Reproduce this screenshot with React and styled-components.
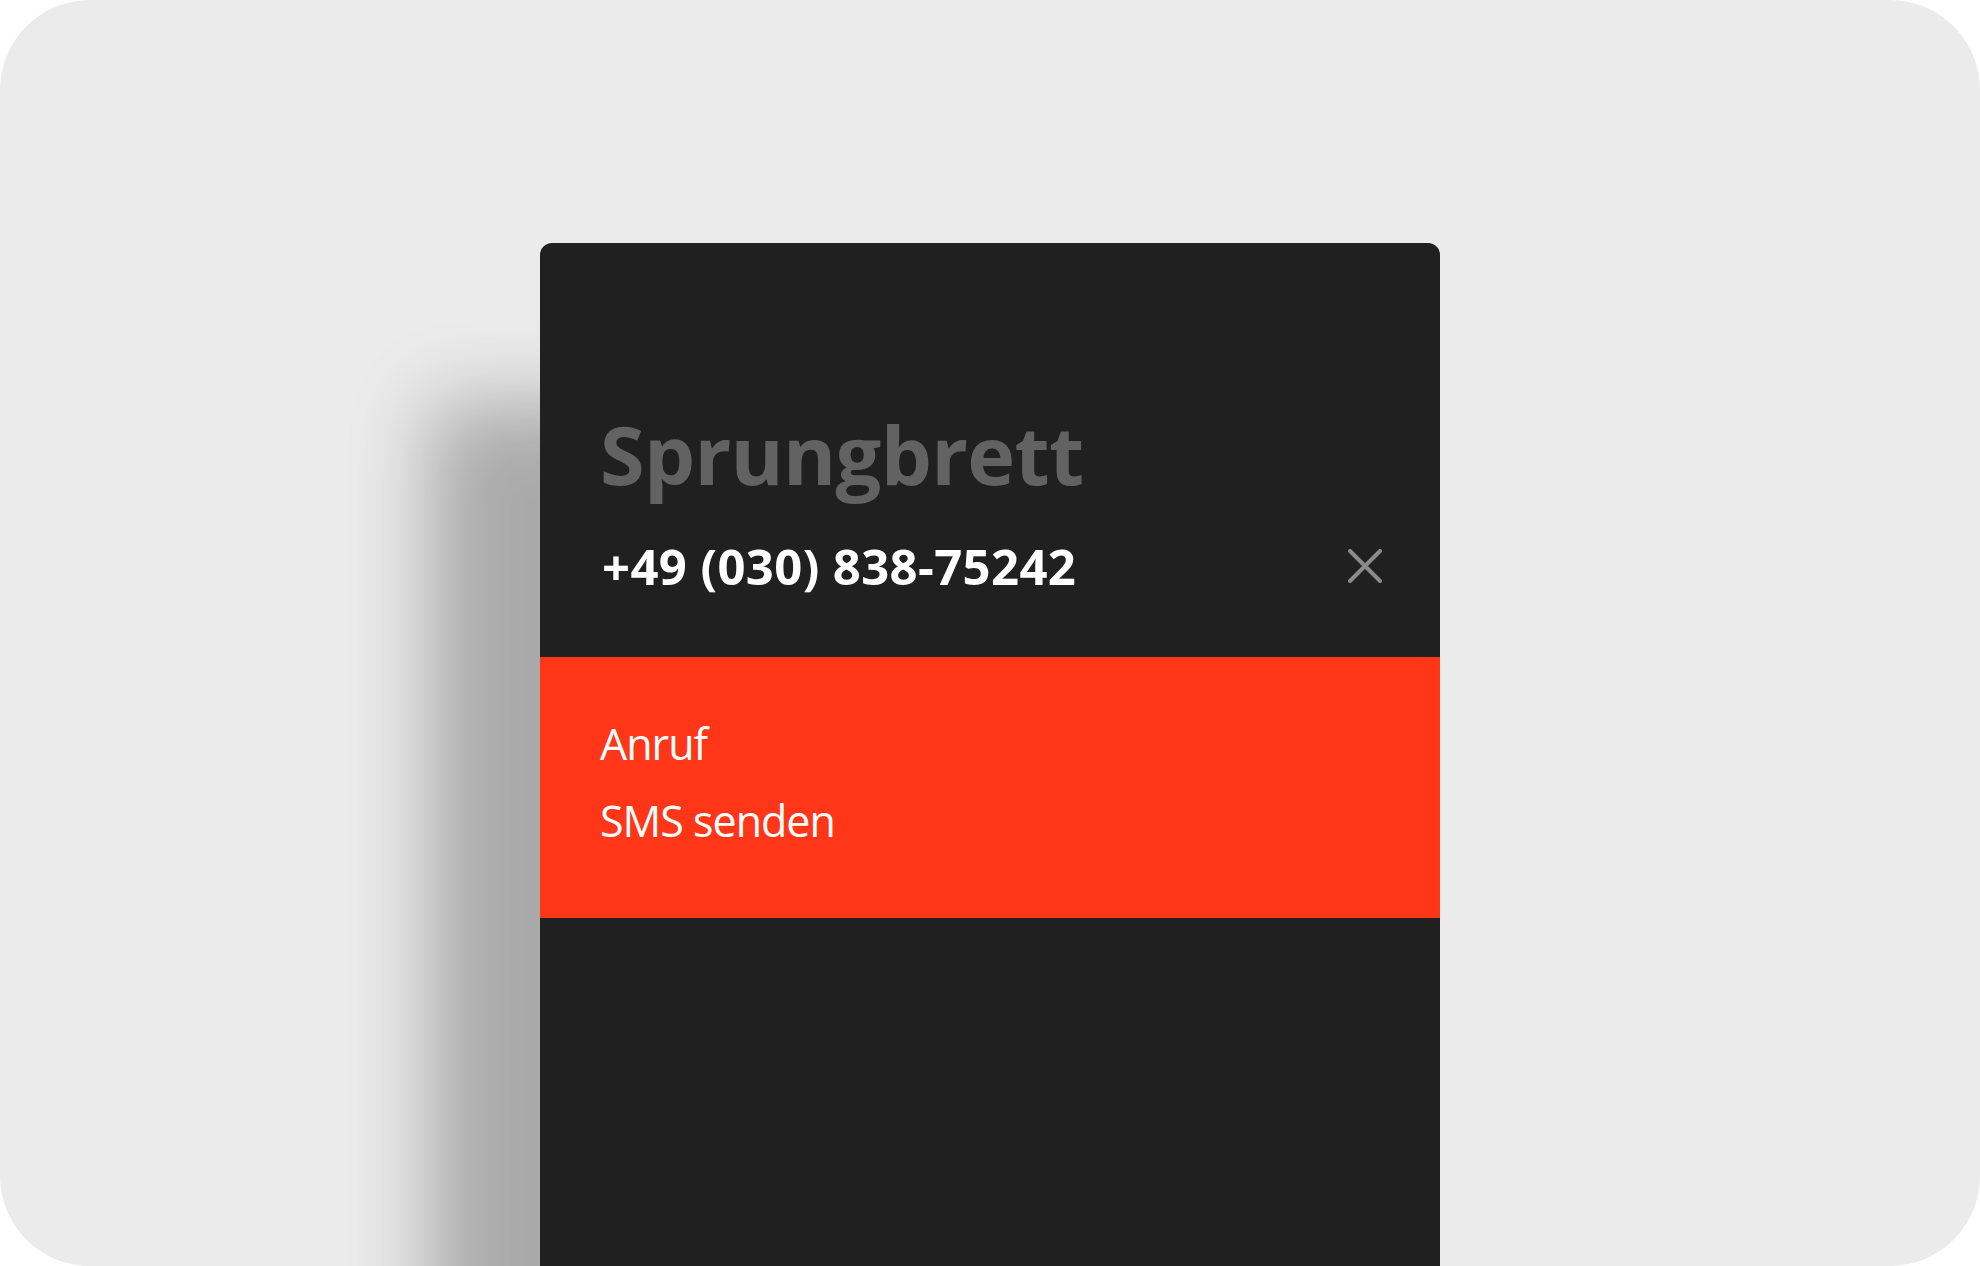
import React from 'react';
import styled, { createGlobalStyle } from 'styled-components';

const GlobalStyle = createGlobalStyle`
  html, body {
    margin: 0;
    padding: 0;
    background: #ffffff;
  }
  * {
    box-sizing: border-box;
  }
`;

const Stage = styled.div`
  width: 1980px;
  height: 1266px;
  background: #ebebeb;
  border-radius: 90px;
  overflow: hidden;
  display: flex;
  justify-content: center;
  padding-top: 243px;
  font-family: "Open Sans", "Noto Sans", sans-serif;
`;

const Panel = styled.div`
  width: 900px;
  height: 1023px;
  flex-shrink: 0;
  background: #202020;
  border-radius: 12px 12px 0 0;
  box-shadow: -110px 160px 80px rgba(0, 0, 0, 0.28);
  display: flex;
  flex-direction: column;
`;

const Header = styled.div`
  padding: 161px 58px 61px 60px;
`;

const Title = styled.h1`
  margin: 0 0 32px;
  font-size: 81px;
  line-height: 100px;
  font-weight: 700;
  letter-spacing: -0.7px;
  color: #626262;
`;

const PhoneRow = styled.div`
  display: flex;
  align-items: center;
  justify-content: space-between;
  height: 60px;
`;

const Phone = styled.div`
  font-size: 49px;
  line-height: 60px;
  font-weight: 700;
  letter-spacing: 0.4px;
  color: #ffffff;
  padding-left: 2px;
`;

const CloseButton = styled.button`
  width: 34px;
  height: 34px;
  padding: 0;
  border: none;
  background: transparent;
  display: flex;
  cursor: pointer;
`;

const Menu = styled.ul`
  list-style: none;
  margin: 0;
  padding: 48px 60px 59px;
  background: #ff3618;
`;

const MenuItem = styled.li`
  font-size: 43px;
  line-height: 77px;
  letter-spacing: -1px;
  color: #ffffff;
`;

const CloseIcon = () => (
  <svg width="34" height="34" viewBox="0 0 34 34">
    <path
      d="M2 2 L32 32 M32 2 L2 32"
      stroke="#8a8a8a"
      strokeWidth="4"
      strokeLinecap="round"
      fill="none"
    />
  </svg>
);

const App = () => {
  return (
    <>
      <GlobalStyle />
      <Stage>
        <Panel>
          <Header>
            <Title>Sprungbrett</Title>
            <PhoneRow>
              <Phone>+49 (030) 838-75242</Phone>
              <CloseButton aria-label="Schließen">
                <CloseIcon />
              </CloseButton>
            </PhoneRow>
          </Header>
          <Menu>
            <MenuItem>Anruf</MenuItem>
            <MenuItem>SMS senden</MenuItem>
          </Menu>
        </Panel>
      </Stage>
    </>
  );
};

export default App;
